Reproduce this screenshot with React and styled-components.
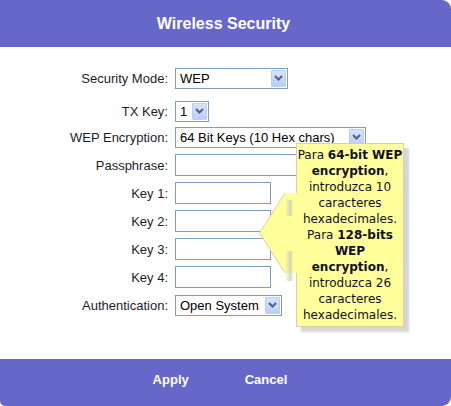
import styled, { createGlobalStyle } from "styled-components";

const GlobalStyle = createGlobalStyle`
  html, body {
    margin: 0;
    padding: 0;
    background: #fff;
  }
  body {
    font-family: "Liberation Sans", Arial, sans-serif;
  }
`;

const Dialog = styled.div`
  width: 451px;
  height: 406px;
  display: flex;
  flex-direction: column;
  background: #fff;
`;

const Header = styled.div`
  height: 47px;
  flex-shrink: 0;
  background: #6767c9;
  border-top-right-radius: 9px;
  color: #fff;
  font-size: 16px;
  font-weight: bold;
  display: flex;
  align-items: center;
  justify-content: center;
  padding-right: 4px;
`;

const Body = styled.form`
  position: relative;
  flex: 1;
  margin: 0;
  padding-top: 17px;
`;

const Row = styled.div`
  display: grid;
  grid-template-columns: 168px auto;
  column-gap: 7px;
  align-items: center;
  justify-items: start;
  height: ${(p) => p.$h || 28}px;
  margin-bottom: ${(p) => p.$mb || 0}px;
`;

const Label = styled.label`
  justify-self: end;
  font-size: 13px;
  color: #1c1c2c;
`;

const TextInput = styled.input`
  box-sizing: border-box;
  width: ${(p) => p.$w}px;
  height: 22px;
  margin: 0;
  padding: 0 4px;
  border: 1px solid #7f9db9;
  background: #fff;
  font: 13px "Liberation Sans", Arial, sans-serif;
  outline: none;
`;

const SelectBox = styled.div`
  box-sizing: border-box;
  display: flex;
  align-items: stretch;
  width: ${(p) => p.$w}px;
  height: 21px;
  border: 1px solid #7f9db9;
  background: #fff;
  padding: 1px;
`;

const NativeSelect = styled.select`
  flex: 1;
  min-width: 0;
  appearance: none;
  border: none;
  background: transparent;
  margin: 0;
  padding: 0 0 0 3px;
  font: 13px "Liberation Sans", Arial, sans-serif;
  color: #000;
  outline: none;
  white-space: nowrap;
  overflow: hidden;
`;

const ArrowBtn = styled.span`
  width: 15px;
  flex-shrink: 0;
  box-sizing: border-box;
  border: 1px solid #b9cdf6;
  border-radius: 1px;
  background: linear-gradient(#d6e2fc, #bccdf7);
  display: flex;
  align-items: center;
  justify-content: center;
`;

const Tooltip = styled.div`
  position: absolute;
  left: 259px;
  top: 96px;
  display: flex;
  align-items: flex-start;
`;

const Pointer = styled.svg`
  display: block;
  margin-top: 50px;
  margin-right: -2px;
  position: relative;
  z-index: 1;
`;

const Bubble = styled.div`
  box-sizing: border-box;
  width: 108px;
  padding: 3px 0;
  background: #ffff9c;
  border: 1px solid #d4d2a8;
  box-shadow: 5px 5px 2px rgba(0, 0, 0, 0.16);
  font: 12px/16px "DejaVu Sans", Verdana, sans-serif;
  color: #101020;
  text-align: center;
  white-space: nowrap;
`;

const Footer = styled.div`
  height: 47px;
  flex-shrink: 0;
  box-sizing: border-box;
  background: #6767c9;
  border-bottom-right-radius: 9px;
  border-bottom-left-radius: 5px;
  display: flex;
  align-items: center;
  justify-content: center;
  gap: 56px;
  padding: 0 11px 6px 0;
`;

const FooterButton = styled.button`
  background: none;
  border: none;
  padding: 0;
  color: #fff;
  font: bold 13px "Liberation Sans", Arial, sans-serif;
  cursor: pointer;
`;

function Select({ width, options }) {
  return (
    <SelectBox $w={width}>
      <NativeSelect defaultValue={options[0]}>
        {options.map((o) => (
          <option key={o}>{o}</option>
        ))}
      </NativeSelect>
      <ArrowBtn>
        <svg width="9" height="6" viewBox="0 0 9 6">
          <polyline
            points="1,1 4.5,4.5 8,1"
            fill="none"
            stroke="#4d6185"
            strokeWidth="2"
          />
        </svg>
      </ArrowBtn>
    </SelectBox>
  );
}

export default function App() {
  return (
    <Dialog>
      <GlobalStyle />
      <Header>Wireless Security</Header>
      <Body onSubmit={(e) => e.preventDefault()}>
        <Row $mb={7}>
          <Label>Security Mode:</Label>
          <Select width={113} options={["WEP", "WPA-PSK", "WPA2-PSK"]} />
        </Row>
        <Row $h={24}>
          <Label>TX Key:</Label>
          <Select width={34} options={["1", "2", "3", "4"]} />
        </Row>
        <Row>
          <Label>WEP Encryption:</Label>
          <Select
            width={191}
            options={["64 Bit Keys (10 Hex chars)", "128 Bit Keys (26 Hex chars)"]}
          />
        </Row>
        <Row>
          <Label>Passphrase:</Label>
          <TextInput $w={190} />
        </Row>
        {[1, 2, 3, 4].map((n) => (
          <Row key={n}>
            <Label>Key {n}:</Label>
            <TextInput $w={96} />
          </Row>
        ))}
        <Row>
          <Label>Authentication:</Label>
          <Select width={107} options={["Open System", "Shared Key"]} />
        </Row>

        {/* help bubble pointing at the key fields */}
        <Tooltip>
          <Pointer width="39" height="90" viewBox="0 0 39 90">
            <defs>
              <linearGradient id="sh" x1="0" x2="1">
                <stop offset="0" stopColor="#c8c8b8" stopOpacity="0" />
                <stop offset="0.55" stopColor="#c4c4b4" stopOpacity="0.7" />
                <stop offset="1" stopColor="#ffff9c" stopOpacity="0" />
              </linearGradient>
            </defs>
            <polygon points="0.5,40 26,0 39,0 39,80 26,80" fill="#ffff9c" />
            <rect x="26" y="7" width="10" height="16" fill="url(#sh)" />
            <rect x="26" y="58" width="10" height="30" fill="url(#sh)" />
            <polyline
              points="26,0 0.5,40 26,80"
              fill="none"
              stroke="#d4d2a8"
              strokeWidth="1"
            />
          </Pointer>
          <Bubble>
            Para <b>64-bit WEP</b>
            <br />
            <b>encryption</b>,
            <br />
            introduzca 10
            <br />
            caracteres
            <br />
            hexadecimales.
            <br />
            Para <b>128-bits</b>
            <br />
            <b>WEP</b>
            <br />
            <b>encryption</b>,
            <br />
            introduzca 26
            <br />
            caracteres
            <br />
            hexadecimales.
          </Bubble>
        </Tooltip>
      </Body>
      <Footer>
        <FooterButton type="button">Apply</FooterButton>
        <FooterButton type="button">Cancel</FooterButton>
      </Footer>
    </Dialog>
  );
}
